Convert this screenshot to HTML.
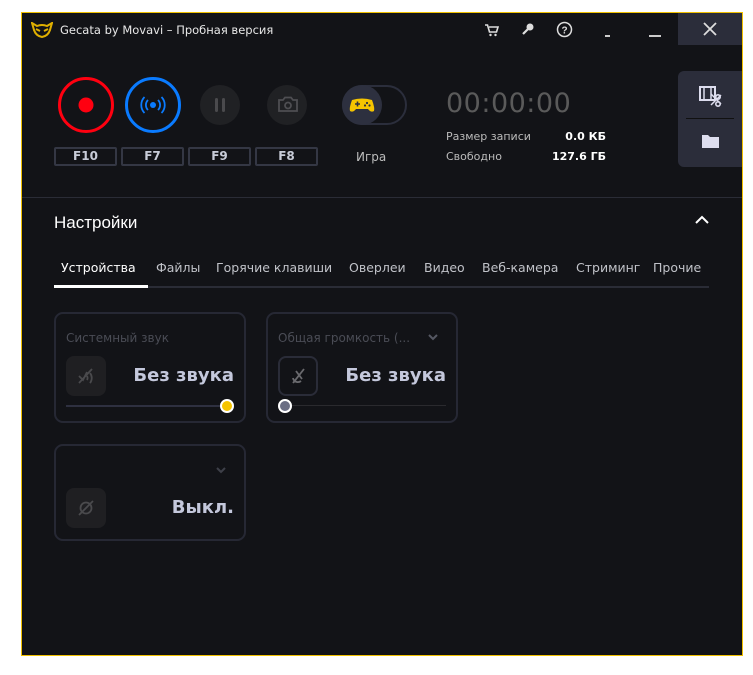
<!DOCTYPE html>
<html><head><meta charset="utf-8"><style>
*{margin:0;padding:0;box-sizing:border-box}
body{width:753px;height:675px;background:#fff;position:relative;overflow:hidden;font-family:"DejaVu Sans","Liberation Sans",sans-serif}
.win{position:absolute;left:21px;top:12px;width:722px;height:644px;background:#121317;border:1px solid #f0c000;overflow:hidden}
.a{position:absolute}
.t{color:#d8d8d8;font-size:11px;white-space:nowrap}
.fk{position:absolute;top:134px;width:63px;height:19px;border:2px solid #343744;border-radius:2px;color:#c8ccd8;font-weight:bold;font-size:12px;text-align:center;line-height:15px}
.card{position:absolute;border:2px solid #262834;border-radius:9px}
.tab{position:absolute;top:247px;font-size:12.5px;color:#c0c2c8;white-space:nowrap}
</style></head><body>
<div class="win">
 <svg class="a" style="left:9px;top:9px" width="22" height="16" viewBox="0 0 22 16"><path d="M1 1 L6 4 Q11 2 16 4 L21 1 L19 8 Q17 14 11 15 Q5 14 3 8 Z" fill="none" stroke="#e0b000" stroke-width="2"/><path d="M5 7 L9 9 M17 7 L13 9" stroke="#e0b000" stroke-width="2"/></svg>
 <div class="a t" style="left:38px;top:10px;font-size:11.5px;color:#e8e8e8">Gecata by Movavi – Пробная версия</div>
 <svg class="a" style="left:462px;top:10px" width="16" height="14" viewBox="0 0 16 14"><path d="M1 2h2.5l2 7h7l1.5-5H5" fill="none" stroke="#ddd" stroke-width="1.6"/><circle cx="6.5" cy="12" r="1.2" fill="#ddd"/><circle cx="11.5" cy="12" r="1.2" fill="#ddd"/></svg>
 <svg class="a" style="left:499px;top:9px" width="14" height="14" viewBox="0 0 14 14"><circle cx="9" cy="5" r="3.5" fill="#ddd"/><path d="M7 7 L2 12" stroke="#ddd" stroke-width="2.2"/></svg>
 <svg class="a" style="left:534px;top:8px" width="17" height="17" viewBox="0 0 17 17"><circle cx="8.5" cy="8.5" r="7" fill="none" stroke="#ddd" stroke-width="1.5"/><text x="8.5" y="12.5" font-size="10" font-weight="bold" fill="#ddd" text-anchor="middle" font-family="Liberation Sans">?</text></svg>
 <div class="a" style="left:583px;top:22px;width:5px;height:2px;background:#ccc"></div>
 <div class="a" style="left:627px;top:22px;width:12px;height:2px;background:#ccc"></div>
 <div class="a" style="left:656px;top:0;width:64px;height:32px;background:#2b2d3a"></div>
 <svg class="a" style="left:681px;top:9px" width="14" height="14"><path d="M1 1L13 13M13 1L1 13" stroke="#ddd" stroke-width="1.8"/></svg>

 <svg class="a" style="left:30px;top:60px" width="400" height="65">
  <circle cx="34" cy="32" r="26.5" fill="none" stroke="#ff0010" stroke-width="3"/>
  <circle cx="34" cy="32" r="7.5" fill="#ff0010"/>
  <circle cx="101" cy="32" r="26.5" fill="none" stroke="#0a7bff" stroke-width="3"/>
  <circle cx="101" cy="32" r="3" fill="#0a7bff"/>
  <path d="M96 27 a7 7 0 0 0 0 10 M106 27 a7 7 0 0 1 0 10 M92.5 24 a11.5 11.5 0 0 0 0 16 M109.5 24 a11.5 11.5 0 0 1 0 16" fill="none" stroke="#0a7bff" stroke-width="1.8"/>
  <circle cx="168" cy="32" r="20" fill="#202124"/>
  <rect x="163" y="25" width="3" height="14" rx="1.5" fill="#4a4a4d"/><rect x="170" y="25" width="3" height="14" rx="1.5" fill="#4a4a4d"/>
  <circle cx="235" cy="32" r="20" fill="#202124"/>
  <path d="M227 27h4l2-2.5h6l2 2.5h4v11h-18z" fill="none" stroke="#4e4e52" stroke-width="1.8"/><circle cx="236" cy="32.5" r="3" fill="none" stroke="#4e4e52" stroke-width="1.8"/>
  <rect x="291" y="13" width="63" height="38" rx="19" fill="none" stroke="#2b2e3c" stroke-width="2"/>
  <circle cx="310" cy="32" r="20" fill="#2d303f"/>
  <path d="M300 27 q10-3 20 0 q3 8 2 11 q-3 2-6-2 h-12 q-3 4-6 2 q-1-3 2-11z" fill="#f5c400"/>
  <path d="M303 31h5M305.5 28.5v5" stroke="#2d303f" stroke-width="1.6"/><circle cx="315" cy="30" r="1.1" fill="#2d303f"/><circle cx="317.5" cy="32.5" r="1.1" fill="#2d303f"/><circle cx="313" cy="32.5" r="1.1" fill="#2d303f"/>
 </svg>
 <div class="fk" style="left:32px">F10</div>
 <div class="fk" style="left:99px">F7</div>
 <div class="fk" style="left:166px">F9</div>
 <div class="fk" style="left:233px">F8</div>
 <div class="a t" style="left:334px;top:137px;font-size:12px;color:#bbb">Игра</div>

 <div class="a" style="left:424px;top:75px;font-size:27px;color:#5a5a5a;font-family:'DejaVu Sans',sans-serif;letter-spacing:0.5px">00:00:00</div>
 <div class="a t" style="left:424px;top:117px;color:#bbb">Размер записи</div>
 <div class="a t" style="left:424px;top:137px;color:#bbb">Свободно</div>
 <div class="a t" style="left:524px;top:117px;width:60px;text-align:right;font-weight:bold;color:#fff">0.0 КБ</div>
 <div class="a t" style="left:504px;top:137px;width:80px;text-align:right;font-weight:bold;color:#fff">127.6 ГБ</div>

 <div class="a" style="left:656px;top:58px;width:66px;height:96px;background:#2b2d3a;border-radius:6px 0 0 6px"></div>
 <div class="a" style="left:664px;top:105px;width:48px;height:1px;background:#111"></div>
 <svg class="a" style="left:677px;top:72px" width="24" height="22"><rect x="1" y="2" width="15" height="13" fill="none" stroke="#dde" stroke-width="2"/><path d="M5 3v11M12 3v11" stroke="#dde" stroke-width="1.5"/><circle cx="19" cy="12" r="2.2" fill="none" stroke="#dde" stroke-width="1.6"/><circle cx="19" cy="19" r="2.2" fill="none" stroke="#dde" stroke-width="1.6"/><path d="M12 9l10 10M12 20l10-10" stroke="#dde" stroke-width="1.5"/></svg>
 <svg class="a" style="left:680px;top:121px" width="18" height="15"><path d="M0 1h6l2 2h9v11H0z" fill="#dde"/></svg>

 <div class="a" style="left:0;top:184px;width:722px;height:1px;background:#2a2c36"></div>
 <div class="a" style="left:32px;top:200px;font-size:17px;color:#fff;font-family:'Liberation Sans',sans-serif">Настройки</div>
 <svg class="a" style="left:673px;top:202px" width="14" height="10"><path d="M1 8L7 2L13 8" fill="none" stroke="#fff" stroke-width="2"/></svg>

 <div class="tab" style="left:39px;color:#fff">Устройства</div>
 <div class="tab" style="left:134px">Файлы</div>
 <div class="tab" style="left:194px">Горячие клавиши</div>
 <div class="tab" style="left:327px">Оверлеи</div>
 <div class="tab" style="left:402px">Видео</div>
 <div class="tab" style="left:460px">Веб-камера</div>
 <div class="tab" style="left:554px">Стриминг</div>
 <div class="tab" style="left:631px">Прочие</div>
 <div class="a" style="left:32px;top:273px;width:655px;height:2px;background:#2a2c36"></div>
 <div class="a" style="left:32px;top:272px;width:94px;height:3px;background:#fff"></div>

 <div class="card" style="left:32px;top:299px;width:192px;height:111px">
  <div class="a t" style="left:10px;top:17px;color:#4a4c55;font-size:12px">Системный звук</div>
  <div class="a" style="left:10px;top:42px;width:40px;height:40px;border-radius:8px;background:#1f1f22"></div>
  <svg class="a" style="left:20px;top:52px" width="20" height="20"><path d="M3 10l4 4 4-8M11 10a4 4 0 0 1 0 4M14 7a8 8 0 0 1 0 10M3 17L16 3" fill="none" stroke="#4a4a4d" stroke-width="1.8"/></svg>
  <div class="a" style="right:10px;top:51px;font-size:18px;font-weight:bold;color:#c4c8dc">Без звука</div>
  <div class="a" style="left:10px;top:91px;width:160px;height:2px;background:#2e3040"></div>
  <div class="a" style="left:164px;top:85px;width:14px;height:14px;border-radius:50%;background:#f5c400;border:2px solid #fff"></div>
 </div>
 <div class="card" style="left:244px;top:299px;width:192px;height:111px">
  <div class="a t" style="left:10px;top:17px;color:#4a4c55;font-size:12px">Общая громкость (...</div>
  <svg class="a" style="left:160px;top:20px" width="10" height="8"><path d="M1 1l4 4 4-4" fill="none" stroke="#555863" stroke-width="2"/></svg>
  <div class="a" style="left:10px;top:42px;width:40px;height:40px;border-radius:8px;border:2px solid #2a2c38"></div>
  <svg class="a" style="left:20px;top:52px" width="20" height="20"><path d="M5 17L16 3M8 5l6 8M5 12a5 5 0 0 0 8 3" fill="none" stroke="#6a6a6e" stroke-width="1.8"/></svg>
  <div class="a" style="right:10px;top:51px;font-size:18px;font-weight:bold;color:#c4c8dc">Без звука</div>
  <div class="a" style="left:10px;top:91px;width:168px;height:1px;background:#2a2a2e"></div>
  <div class="a" style="left:10px;top:85px;width:14px;height:14px;border-radius:50%;background:#6a6e84;border:2px solid #fff"></div>
 </div>
 <div class="card" style="left:32px;top:431px;width:192px;height:97px">
  <svg class="a" style="left:160px;top:21px" width="10" height="8"><path d="M1 1l4 4 4-4" fill="none" stroke="#3e4049" stroke-width="2"/></svg>
  <div class="a" style="left:10px;top:42px;width:40px;height:40px;border-radius:8px;background:#1f1f22"></div>
  <svg class="a" style="left:20px;top:52px" width="20" height="20"><circle cx="10" cy="10" r="5.5" fill="none" stroke="#4a4a4d" stroke-width="1.8"/><path d="M3 17L17 3" stroke="#4a4a4d" stroke-width="1.8"/></svg>
  <div class="a" style="right:10px;top:51px;font-size:18px;font-weight:bold;color:#c4c8dc">Выкл.</div>
 </div>
</div>
</body></html>
